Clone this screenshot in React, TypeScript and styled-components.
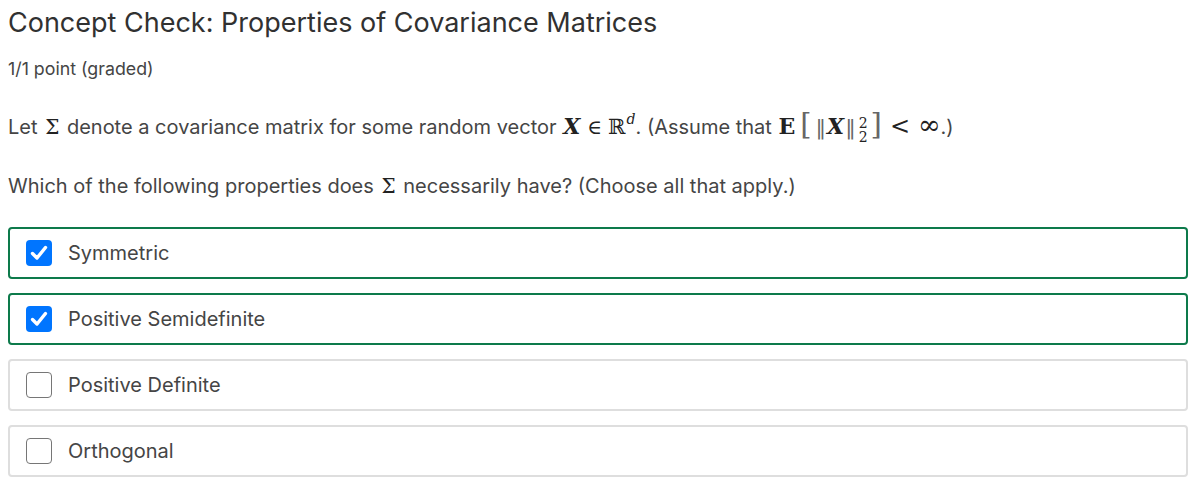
import React from "react";
import styled, { createGlobalStyle } from "styled-components";

const Global = createGlobalStyle`
  html, body { margin: 0; padding: 0; background: #fff; }
  body { font-family: Inter, "Noto Sans", sans-serif; color: #454545; }
`;

const Page = styled.div`
  padding: 6px 10px 0 8px;
`;

const Title = styled.h2`
  margin: 0;
  font-size: 27px;
  font-weight: 400;
  line-height: 34px;
  color: #313131;
`;

const Points = styled.div`
  margin-top: 18px;
  font-size: 17.8px;
  line-height: 22px;
  color: #454545;
`;

const Para = styled.p<{ $top: number }>`
  margin: ${(p) => p.$top}px 0 0;
  font-size: 20px;
  line-height: 30px;
  height: 30px;
  color: #454545;
  white-space: nowrap;
`;

const Serif = styled.span<{ $size?: number; $gap?: number }>`
  font-family: "DejaVu Serif", "Liberation Serif", serif;
  color: #222;
  font-size: ${(p) => p.$size ?? 20}px;
  margin: 0 ${(p) => p.$gap ?? 0}px;
`;

const Sym = styled(Serif)<{ $bold?: boolean; $italic?: boolean }>`
  font-weight: ${(p) => (p.$bold ? 700 : 400)};
  font-style: ${(p) => (p.$italic ? "italic" : "normal")};
`;

const Sup = styled.sup`
  font-family: "DejaVu Serif", serif;
  font-style: italic;
  font-size: 14px;
  vertical-align: 10px;
  line-height: 0;
  color: #222;
  margin-left: 1px;
`;

const Stack = styled.span`
  display: inline-flex;
  flex-direction: column;
  vertical-align: 6px;
  font-family: "DejaVu Serif", serif;
  font-size: 14px;
  line-height: 14px;
  color: #222;
  margin: 0 3px 0 3px;
`;

const Delim = styled(Serif)`
  color: #666;
  line-height: 0;
`;

const List = styled.div`
  margin-top: 26px;
  display: flex;
  flex-direction: column;
  gap: 14px;
`;

const Option = styled.label<{ $checked: boolean }>`
  display: flex;
  align-items: center;
  gap: 16px;
  height: 52px;
  box-sizing: border-box;
  padding: 0 16px;
  border: 2px solid ${(p) => (p.$checked ? "#0d7a4b" : "#dedede")};
  border-radius: 4px;
  font-size: 20px;
  color: #454545;
`;

const Box = styled.span<{ $checked: boolean }>`
  width: 26px;
  height: 26px;
  box-sizing: border-box;
  border-radius: 4px;
  display: flex;
  align-items: center;
  justify-content: center;
  background: ${(p) => (p.$checked ? "#0075ff" : "#fff")};
  border: ${(p) => (p.$checked ? "none" : "1.3px solid #767676")};
`;

const options = [
  { label: "Symmetric", checked: true },
  { label: "Positive Semidefinite", checked: true },
  { label: "Positive Definite", checked: false },
  { label: "Orthogonal", checked: false },
];

export default function App() {
  return (
    <>
      <Global />
      <Page>
        <Title>Concept Check: Properties of Covariance Matrices</Title>
        <Points>1/1 point (graded)</Points>
        <Para $top={30}>
          Let <Sym $gap={2}>Σ</Sym> denote a covariance matrix for some random vector{" "}
          <Sym $bold $italic $size={22} $gap={1}>X</Sym>
          <Sym $gap={6}>∈</Sym>
          <Serif $size={21}>ℝ</Serif>
          <Sup>d</Sup>. (Assume that <Sym $bold $size={22} $gap={1}>E</Sym>
          <Delim $size={29} $gap={4}>[</Delim>
          <Delim $size={21}>‖</Delim>
          <Sym $bold $italic $size={22} $gap={1}>X</Sym>
          <Delim $size={21}>‖</Delim>
          <Stack>
            <span>2</span>
            <span>2</span>
          </Stack>
          <Delim $size={29}>]</Delim>
          <Sym $size={24} $gap={8}>&lt;</Sym>
          <Serif $size={27}>∞</Serif>.)
        </Para>
        <Para $top={31}>
          Which of the following properties does <Sym $gap={2}>Σ</Sym> necessarily have? (Choose
          all that apply.)
        </Para>
        <List>
          {options.map((o) => (
            <Option key={o.label} $checked={o.checked}>
              <Box $checked={o.checked}>
                {o.checked && (
                  <svg width="18" height="16" viewBox="0 0 18 16">
                    <path
                      d="M2.5 8.5 L7 13 L15.5 2.5"
                      fill="none"
                      stroke="#fff"
                      strokeWidth="3.4"
                      strokeLinecap="round"
                      strokeLinejoin="round"
                    />
                  </svg>
                )}
              </Box>
              {o.label}
            </Option>
          ))}
        </List>
      </Page>
    </>
  );
}
